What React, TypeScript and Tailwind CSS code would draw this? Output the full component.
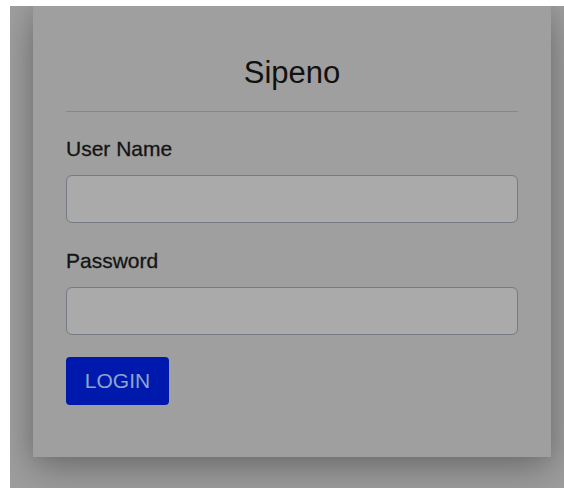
import React from 'react';

const Field: React.FC<{ label: string; type?: string }> = ({ label, type = 'text' }) => (
  <div className="flex flex-col">
    <label className="text-[21px] leading-[24px] text-[#141414] [-webkit-text-stroke:0.3px_#141414]">{label}</label>
    <input
      type={type}
      className="mt-[14px] h-[48px] w-full rounded-[6px] border-[1.5px] border-[#767a82] bg-[#aaaaaa] px-3 outline-none"
    />
  </div>
);

export default function App() {
  return (
    <div className="min-h-[488px] bg-white pl-[10px] pt-[6px] font-['Liberation_Sans',Arial,sans-serif]">
      {/* dimmed backdrop */}
      <div className="h-[482px] overflow-hidden bg-[#9e9e9e] pl-[23px]">
        <div className="h-[451px] w-[518px] bg-[#9f9f9f] px-[33px] pt-[49px] shadow-[0_14px_36px_rgba(0,0,0,0.26),0_0_20px_rgba(0,0,0,0.12)]">
          <h1 className="text-center text-[31px] leading-[36px] text-[#111]">Sipeno</h1>
          <hr className="mt-[20px] border-t border-[#868686]" />

          <div className="mt-[25px] flex flex-col gap-[26px]">
            <Field label="User Name" />
            <Field label="Password" type="password" />
          </div>

          <button className="mt-[22px] flex h-[48px] w-[103px] items-center justify-center rounded-[4px] bg-[#0019ad] text-[21px] text-[#8ea4cc]">
            LOGIN
          </button>
        </div>
      </div>
    </div>
  );
}
